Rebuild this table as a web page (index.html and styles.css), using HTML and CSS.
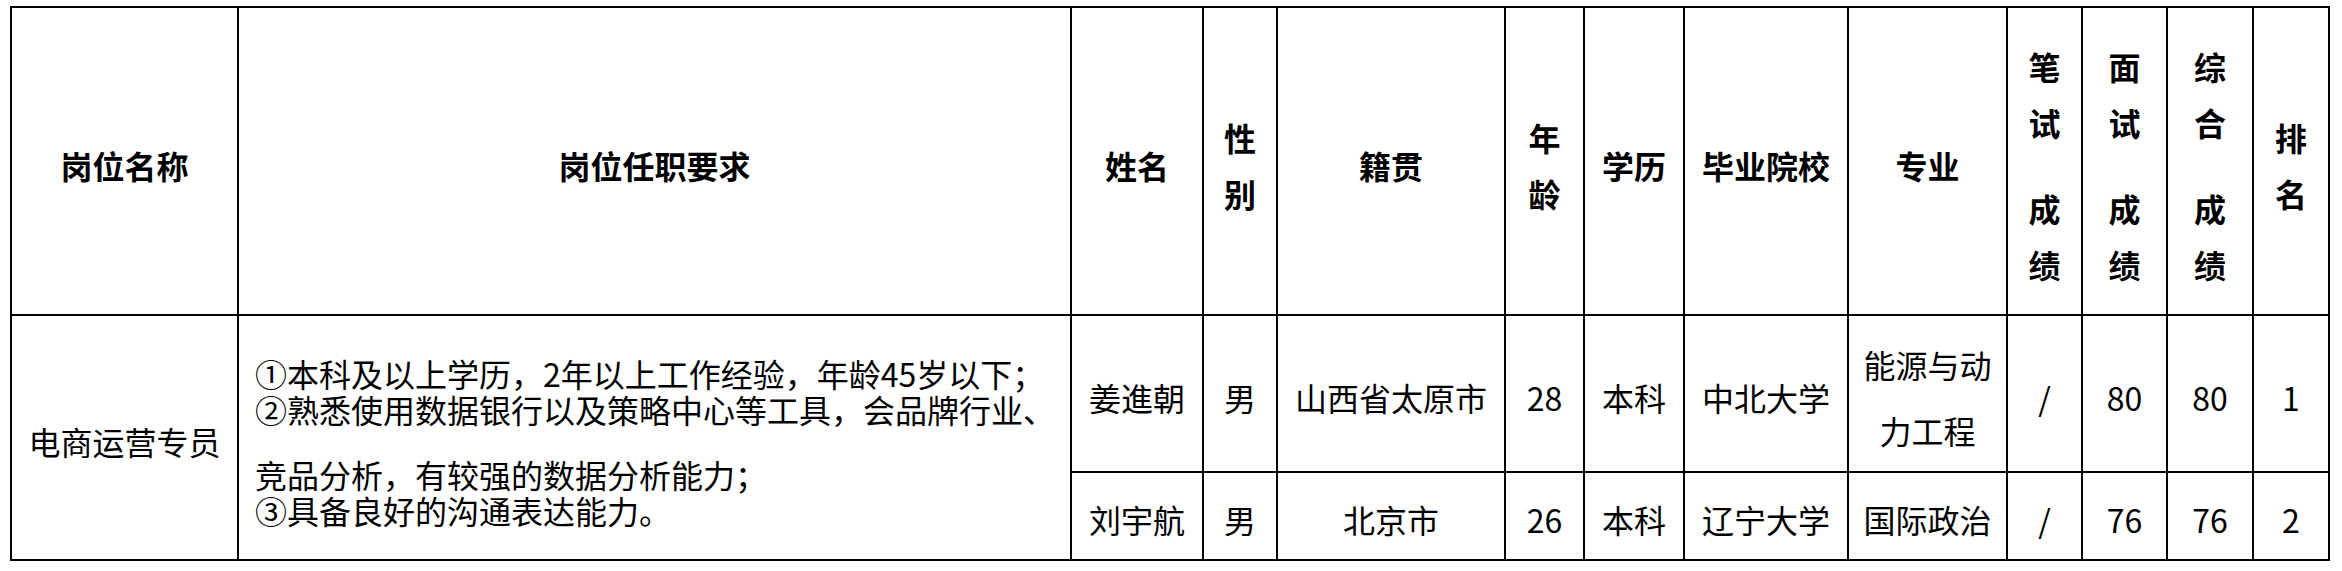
FILE: index.html
```html
<!DOCTYPE html>
<html lang="zh-CN">
<head>
<meta charset="utf-8">
<title>岗位信息</title>
<link rel="stylesheet" href="styles.css">
</head>
<body>
<table class="grid">
  <colgroup>
    <col class="c-post">
    <col class="c-req">
    <col class="c-name">
    <col class="c-sex">
    <col class="c-home">
    <col class="c-age">
    <col class="c-edu">
    <col class="c-school">
    <col class="c-major">
    <col class="c-score">
    <col class="c-score2">
    <col class="c-score3">
    <col class="c-rank">
  </colgroup>
  <tr class="row-head">
    <th>岗位名称</th>
    <th>岗位任职要求</th>
    <th>姓名</th>
    <th class="stack">性<br>别</th>
    <th>籍贯</th>
    <th class="stack">年<br>龄</th>
    <th>学历</th>
    <th>毕业院校</th>
    <th>专业</th>
    <th class="stack"><div>笔<br>试</div><div class="gap">成<br>绩</div></th>
    <th class="stack"><div>面<br>试</div><div class="gap">成<br>绩</div></th>
    <th class="stack"><div>综<br>合</div><div class="gap">成<br>绩</div></th>
    <th class="stack">排<br>名</th>
  </tr>
  <tr class="row-one">
    <td rowspan="2">电商运营专员</td>
    <td rowspan="2" class="req">
      <div class="req-text">
        <p>①本科及以上学历，2年以上工作经验，年龄45岁以下；<br>②熟悉使用数据银行以及策略中心等工具，会品牌行业、</p>
        <p class="gap">竞品分析，有较强的数据分析能力；<br>③具备良好的沟通表达能力。</p>
      </div>
    </td>
    <td>姜進朝</td>
    <td>男</td>
    <td>山西省太原市</td>
    <td>28</td>
    <td>本科</td>
    <td>中北大学</td>
    <td class="two-line">能源与动<br>力工程</td>
    <td>/</td>
    <td>80</td>
    <td>80</td>
    <td>1</td>
  </tr>
  <tr class="row-two">
    <td>刘宇航</td>
    <td>男</td>
    <td>北京市</td>
    <td>26</td>
    <td>本科</td>
    <td>辽宁大学</td>
    <td>国际政治</td>
    <td>/</td>
    <td>76</td>
    <td>76</td>
    <td>2</td>
  </tr>
</table>
</body>
</html>
```

FILE: styles.css
```css
html, body {
  margin: 0;
  padding: 0;
  background: #ffffff;
}

body {
  padding: 6px 0 0 10px;
  font-family: "Noto Sans CJK SC", "Microsoft YaHei", sans-serif;
  color: #000000;
}

.grid {
  table-layout: fixed;
  border-collapse: separate;
  border-spacing: 0;
  width: 2320px;
  border-top: 2px solid #000;
  border-left: 2px solid #000;
}

.c-post { width: 227px; }
.c-req { width: 833px; }
.c-name { width: 132px; }
.c-sex { width: 74px; }
.c-home { width: 228px; }
.c-age { width: 79px; }
.c-edu { width: 100px; }
.c-school { width: 164px; }
.c-major { width: 159px; }
.c-score { width: 75px; }
.c-score2 { width: 85px; }
.c-score3 { width: 86px; }
.c-rank { width: 76px; }

.grid th,
.grid td {
  border-right: 2px solid #000;
  border-bottom: 2px solid #000;
  padding: 0;
  text-align: center;
  vertical-align: middle;
  font-size: 32px;
  white-space: nowrap;
  overflow: hidden;
}

.grid th {
  font-weight: 700;
  line-height: 56px;
  padding-top: 8px;
}

.grid td {
  font-weight: 400;
  line-height: 40px;
  padding-top: 6px;
}

.row-head { height: 308px; }
.row-one { height: 157px; }
.row-two { height: 88px; }

.stack .gap {
  margin-top: 30px;
}

.grid td.req {
  text-align: left;
  padding: 8px 0 0 16px;
}

.req-text p {
  margin: 0;
  line-height: 36px;
}

.req-text p.gap {
  margin-top: 29px;
}

.grid td.two-line {
  line-height: 66px;
}
```
